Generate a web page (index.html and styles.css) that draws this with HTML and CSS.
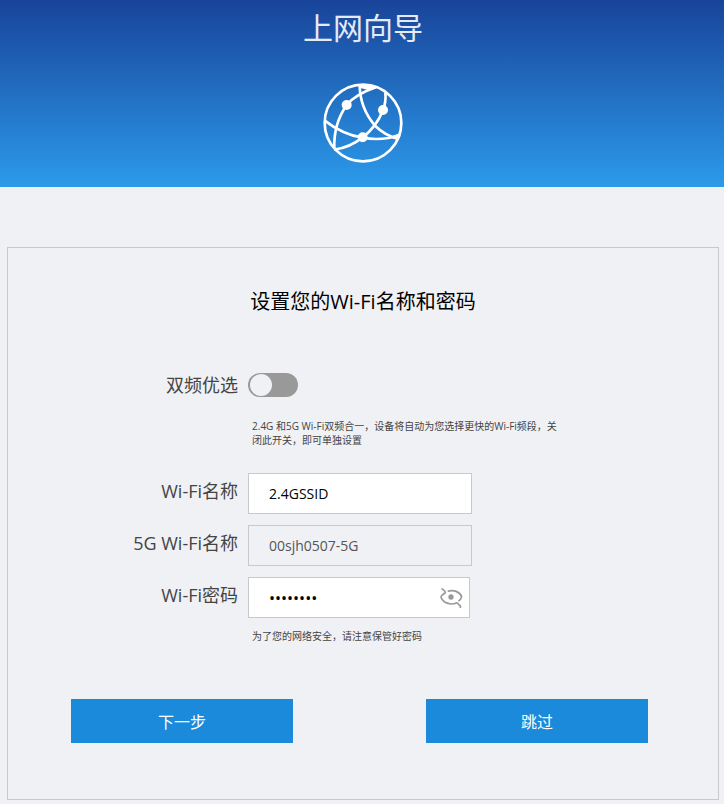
FILE: index.html
```
<!DOCTYPE html>
<html lang="zh-CN">
<head>
<meta charset="utf-8">
<meta name="viewport" content="width=device-width, initial-scale=1">
<title>上网向导</title>
<link rel="stylesheet" href="styles.css">
</head>
<body>
<header class="banner">
  <h1 class="banner-title">上网向导</h1>
  <svg class="banner-icon" viewBox="99 249 240 240" aria-hidden="true">
    <g fill="none" stroke="#fff" stroke-width="8">
      <circle cx="219" cy="369" r="115"/>
      <path d="M258 262Q198 282 170 315Q130 372 133 447"/>
      <path d="M209 256Q210 325 255 377Q285 406 325 417"/>
      <path d="M104 362Q160 405 218 413Q275 424 331 405"/>
      <path d="M286 277Q289 305 279 330Q260 380 218 412Q180 442 133 449"/>
    </g>
    <g fill="#fff">
      <circle cx="170" cy="315" r="15"/>
      <circle cx="279" cy="330" r="15"/>
      <circle cx="218" cy="412" r="15"/>
      <path d="M208 253L256 260L238 271L214 265zM300 410L331 399L322 421z"/>
    </g>
  </svg>
</header>
<main class="card">
  <h2 class="card-title">设置您的Wi-Fi名称和密码</h2>
  <form>
    <div class="row row-switch">
      <label class="label" for="dual">双频优选</label>
      <input class="switch" id="dual" type="checkbox" role="switch">
    </div>
    <p class="hint hint-dual">2.4G 和5G Wi-Fi双频合一，设备将自动为您选择更快的Wi-Fi频段，关闭此开关，即可单独设置</p>
    <div class="fields">
      <div class="row">
        <label class="label" for="ssid">Wi-Fi名称</label>
        <input class="field" id="ssid" type="text" value="2.4GSSID">
      </div>
      <div class="row">
        <label class="label" for="ssid5">5G Wi-Fi名称</label>
        <input class="field" id="ssid5" type="text" value="00sjh0507-5G" disabled>
      </div>
      <div class="row">
        <label class="label" for="pwd">Wi-Fi密码</label>
        <div class="field password">
          <input class="password-input" id="pwd" type="password" value="12345678">
          <button class="reveal" type="button" aria-label="显示密码">
            <svg class="reveal-icon" viewBox="600 48 69 66" aria-hidden="true">
              <g fill="none" stroke="#999" stroke-width="5">
                <path d="M605 52C608 58 616 56 616 65C609 69 604 74 603 79C606 90 619 99 634 99C640 99 645 98 649 96"/>
                <path d="M623 61C641 55 659 62 665 77C664 83 661 87 655 90"/>
                <path d="M648 96C657 94 654 104 661 104V111"/>
              </g>
              <circle cx="633" cy="78" r="8" fill="#999"/>
            </svg>
          </button>
        </div>
      </div>
    </div>
    <p class="hint hint-password">为了您的网络安全，请注意保管好密码</p>
    <div class="actions">
      <button class="button" type="submit">下一步</button>
      <button class="button" type="button">跳过</button>
    </div>
  </form>
</main>
</body>
</html>
```
FILE: styles.css
```
* {
  box-sizing: border-box;
}

body {
  margin: 0;
  background: #f0f1f5;
  color: #444;
  font-family: "Open Sans", "Noto Sans CJK SC", sans-serif;
}

h1, h2, p {
  margin: 0;
  font-weight: 400;
}

input, button {
  margin: 0;
  font-family: inherit;
}

.banner {
  display: flex;
  flex-direction: column;
  align-items: center;
  gap: 35px;
  padding: 8px 0 24px 2px;
  background: linear-gradient(#18449a, #2c9aea);
}

.banner-title {
  color: #e4ebf6;
  font-size: 30px;
  line-height: 40px;
}

.banner-icon {
  width: 80px;
  height: 80px;
}

.card {
  margin: 60px 5px 4px 7px;
  padding: 40px 0 56px;
  border: 1px solid #c8c9cc;
}

.card-title {
  margin-bottom: 57px;
  color: #000;
  font-size: 20px;
  line-height: 28px;
  text-align: center;
}

.row {
  display: grid;
  grid-template-columns: 32.4% 1fr;
  column-gap: 10px;
}

.row-switch {
  align-items: center;
}

.label {
  font-size: 18px;
  line-height: 36px;
  text-align: right;
}

.row-switch .label {
  line-height: 24px;
}

.switch {
  appearance: none;
  display: flex;
  width: 50px;
  height: 24px;
  padding: 1px 2px;
  border-radius: 12px;
  background: #999;
}

.switch::before {
  content: "";
  width: 22px;
  height: 22px;
  border-radius: 50%;
  background: #f0f1f5;
}

.switch:checked {
  justify-content: flex-end;
  background: #1c8adb;
}

.hint {
  margin-left: calc(32.4% + 14px);
  max-width: 312px;
  font-size: 10px;
  line-height: 14px;
}

.hint-dual {
  margin-top: 22px;
}

.hint-password {
  margin-top: 11px;
}

.fields {
  display: grid;
  gap: 11px;
  margin-top: 26px;
}

.field {
  width: 224px;
  height: 41px;
  padding: 0 20px;
  border: 1px solid #c8c9cc;
  background: #fff;
  color: #000;
  font-size: 14px;
}

.field:disabled {
  background: #f0f1f5;
  color: #555;
}

.password {
  display: flex;
  align-items: center;
  width: 222px;
  padding: 0 6px 0 20px;
}

.password-input {
  flex: 1;
  min-width: 0;
  padding: 0;
  border: 0;
  background: none;
  color: #000;
  font-size: 16px;
}

.reveal {
  display: flex;
  padding: 0;
  border: 0;
  background: none;
}

.reveal-icon {
  width: 23px;
  height: 22px;
}

.actions {
  display: flex;
  justify-content: space-between;
  margin-top: 56px;
  padding: 0 70px 0 63px;
}

.button {
  width: 222px;
  height: 44px;
  padding: 0;
  border: 0;
  background: #1c8adb;
  color: #fff;
  font-size: 16px;
}
```
